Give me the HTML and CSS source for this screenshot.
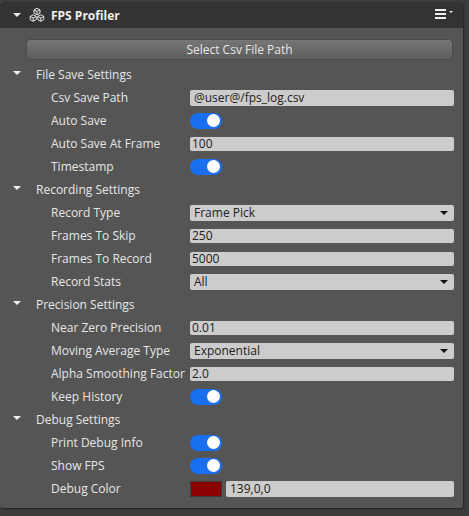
FILE: index.html
```html
<!DOCTYPE html>
<html lang="en">
<head>
  <meta charset="UTF-8">
  <title>FPS Profiler</title>
  <meta name="viewport" content="width=device-width, initial-scale=1.0">
  <link rel="stylesheet" href="styles.css">
</head>
<body>
  <div class="panel">
    <div class="header">
      <span class="arrow"></span>
      <svg class="logo" width="16" height="16" viewBox="0 0 16 16" fill="none" stroke="#e6e6e6" stroke-width="1">
        <path d="M8 1.3l3 1.6v3.2L8 7.8 5 6.1V2.9zM5 2.9l3 1.6 3-1.6M8 4.5v3.3"/>
        <path d="M4.2 7.8l3 1.6v3.2l-3 1.7-3-1.7V9.4zM1.2 9.4l3 1.6 3-1.6M4.2 11v3.3"/>
        <path d="M11.8 7.8l3 1.6v3.2l-3 1.7-3-1.7V9.4zM8.8 9.4l3 1.6 3-1.6M11.8 11v3.3"/>
      </svg>
      <span class="title">FPS Profiler</span>
      <span class="menu">
        <span class="burger"><i></i><i></i><i></i></span>
        <span class="menu-arrow"></span>
      </span>
    </div>

    <div class="body">
      <div class="btn">Select Csv File Path</div>

      <div class="section"><span class="arrow"></span>File Save Settings</div>
      <div class="row"><label>Csv Save Path</label><div class="field tall">@user@/fps_log.csv</div></div>
      <div class="row"><label>Auto Save</label><div class="toggle"></div></div>
      <div class="row"><label>Auto Save At Frame</label><div class="field num">100</div></div>
      <div class="row"><label>Timestamp</label><div class="toggle"></div></div>

      <div class="section"><span class="arrow"></span>Recording Settings</div>
      <div class="row"><label>Record Type</label><div class="field tall select">Frame Pick</div></div>
      <div class="row"><label>Frames To Skip</label><div class="field num">250</div></div>
      <div class="row"><label>Frames To Record</label><div class="field num">5000</div></div>
      <div class="row"><label>Record Stats</label><div class="field tall select">All</div></div>

      <div class="section"><span class="arrow"></span>Precision Settings</div>
      <div class="row"><label>Near Zero Precision</label><div class="field num">0.01</div></div>
      <div class="row"><label>Moving Average Type</label><div class="field tall select">Exponential</div></div>
      <div class="row"><label>Alpha Smoothing Factor</label><div class="field num">2.0</div></div>
      <div class="row"><label>Keep History</label><div class="toggle"></div></div>

      <div class="section"><span class="arrow"></span>Debug Settings</div>
      <div class="row"><label>Print Debug Info</label><div class="toggle"></div></div>
      <div class="row"><label>Show FPS</label><div class="toggle"></div></div>
      <div class="row">
        <label>Debug Color</label>
        <div class="color-wrap">
          <div class="swatch"></div>
          <div class="field tall">139,0,0</div>
        </div>
      </div>
    </div>
  </div>
</body>
</html>
```

FILE: styles.css
```css
body {
  margin: 0;
  height: 516px;
  overflow: hidden;
  background: #3d3d3d;
  font-family: "Open Sans", sans-serif;
  font-size: 12px;
  color: #e6e6e6;
}
.panel {
  width: 463px;
  height: 506px;
  margin-top: 2px;
  background: #555;
  border-radius: 0 3px 3px 3px;
  box-shadow: 1px 1px 2px #222;
}
.header {
  display: flex;
  align-items: center;
  height: 26px;
  padding: 0 10px 0 13px;
  background: #333;
  border-radius: 3px 3px 0 0;
}
.arrow {
  display: block;
  width: 0;
  height: 0;
  border-left: 4px solid transparent;
  border-right: 4px solid transparent;
  border-top: 4px solid #eee;
}
.logo {
  margin-left: 8px;
}
.title {
  margin-left: 6px;
  font-weight: 700;
  color: #eee;
}
.menu {
  display: flex;
  margin-left: auto;
  margin-bottom: 2px;
}
.burger {
  display: flex;
  flex-direction: column;
  gap: 2px;
  width: 11px;
}
.burger i {
  display: block;
  height: 2px;
  background: #eee;
}
.menu-arrow {
  width: 0;
  height: 0;
  margin: 2px 0 0 3px;
  border-left: 2px solid transparent;
  border-right: 2px solid transparent;
  border-top: 2px solid #eee;
}
.body {
  padding: 11px 9px 0 13px;
}
.btn {
  height: 21px;
  margin: 0 1px 3px 13px;
  line-height: 19px;
  text-align: center;
  background: linear-gradient(#767676, #5e5e5e);
  border: 1px solid #4a4a4a;
  border-radius: 4px;
  box-sizing: border-box;
}
.section {
  display: flex;
  align-items: center;
  height: 23px;
}
.section .arrow {
  margin: -3px 15px 0 0;
}
.row {
  display: flex;
  align-items: center;
  height: 23px;
  padding-left: 38px;
}
.row label {
  width: 139px;
  flex: none;
  white-space: nowrap;
}
.field {
  flex: 1;
  box-sizing: border-box;
  height: 14px;
  line-height: 14px;
  padding-left: 2px;
  color: #222;
  background: #ccc;
  border-radius: 2px;
}
.field.tall {
  height: 16px;
  line-height: 16px;
  padding-left: 4px;
}
.select {
  position: relative;
}
.select::after {
  content: "";
  position: absolute;
  right: 6px;
  top: 6px;
  border-left: 4px solid transparent;
  border-right: 4px solid transparent;
  border-top: 4px solid #111;
}
.toggle {
  position: relative;
  width: 32px;
  height: 16px;
  background: #1a6ef0;
  border-radius: 8px;
}
.toggle::after {
  content: "";
  position: absolute;
  right: 2px;
  top: 1.5px;
  width: 13px;
  height: 13px;
  background: #fff;
  border-radius: 50%;
}
.color-wrap {
  flex: 1;
  display: flex;
  align-items: center;
  gap: 4px;
}
.swatch {
  box-sizing: border-box;
  width: 32px;
  height: 16px;
  background: #8b0000;
  border: 1px solid #3a3a3a;
}
```
